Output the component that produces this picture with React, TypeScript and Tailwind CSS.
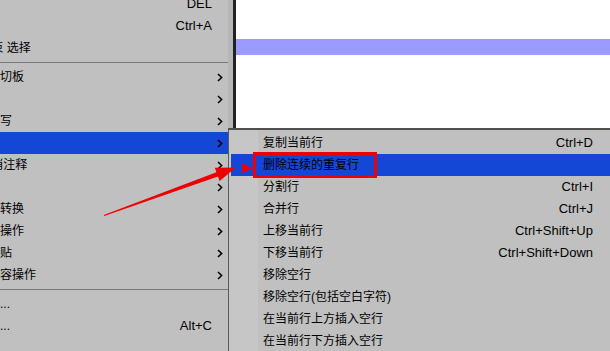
type MenuItem = {
  label: string;
  shortcut?: string;
  sub?: boolean;
  active?: boolean;
};

const topItems: MenuItem[] = [
  { label: "删除", shortcut: "DEL" },
  { label: "全选", shortcut: "Ctrl+A" },
  { label: "开始/结束 选择" },
];

const midItems: MenuItem[] = [
  { label: "复制到剪切板", sub: true },
  { label: "缩进", sub: true },
  { label: "转换大小写", sub: true },
  { label: "行操作", sub: true, active: true },
  { label: "注释/取消注释", sub: true },
  { label: "自动完成", sub: true },
  { label: "文档格式转换", sub: true },
  { label: "空白字符操作", sub: true },
  { label: "选择性粘贴", sub: true },
  { label: "选中的内容操作", sub: true },
];

const bottomItems: MenuItem[] = [
  { label: "列块模式..." },
  { label: "列块编辑...", shortcut: "Alt+C" },
  { label: "字符面板" },
];

const lineItems: MenuItem[] = [
  { label: "复制当前行", shortcut: "Ctrl+D" },
  { label: "删除连续的重复行", active: true },
  { label: "分割行", shortcut: "Ctrl+I" },
  { label: "合并行", shortcut: "Ctrl+J" },
  { label: "上移当前行", shortcut: "Ctrl+Shift+Up" },
  { label: "下移当前行", shortcut: "Ctrl+Shift+Down" },
  { label: "移除空行" },
  { label: "移除空行(包括空白字符)" },
  { label: "在当前行上方插入空行" },
  { label: "在当前行下方插入空行" },
];

const Chevron = () => (
  <svg width="6" height="9" viewBox="0 0 6 9">
    <path d="M1 1 L4.6 4.5 L1 8" fill="none" stroke="#000" strokeWidth="1.6" />
  </svg>
);

const LeftRow = ({ item, first = false }: { item: MenuItem; first?: boolean }) => (
  <div
    className={`h-[22px] flex items-center pr-[5px] ${first ? "mt-[-7px]" : ""} ${
      item.active ? "bg-[#1547d6]" : ""
    }`}
  >
    <span className="ml-[-48px] shrink-0 whitespace-nowrap">{item.label}</span>
    <div className="flex-1" />
    {item.shortcut && <span className="text-[13px] whitespace-nowrap">{item.shortcut}</span>}
    <div className="w-[11px] flex justify-end">{item.sub && <Chevron />}</div>
  </div>
);

const Separator = () => (
  <div className="h-[7px] flex items-center">
    <div className="w-full h-px bg-[#7a7a7a]" />
  </div>
);

const SubRow = ({ item }: { item: MenuItem }) => (
  <div className={`h-[22px] flex items-center pr-[17px] ${item.active ? "bg-[#1547d6]" : ""}`}>
    <div className="w-[27px] shrink-0" />
    <span className="pl-[5px] whitespace-nowrap">{item.label}</span>
    <div className="flex-1" />
    {item.shortcut && <span className="text-[13px] whitespace-nowrap">{item.shortcut}</span>}
  </div>
);

export default function App() {
  return (
    <div className="relative w-[610px] h-[351px] overflow-hidden flex bg-[#c0c0c0] text-black text-[12px] font-['Liberation_Sans','Noto_Sans_CJK_SC',sans-serif]">
      {/* main edit menu, clipped on the left */}
      <div className="w-[228px] shrink-0 overflow-hidden">
        {topItems.map((it, i) => (
          <LeftRow key={it.label} item={it} first={i === 0} />
        ))}
        <Separator />
        {midItems.map((it) => (
          <LeftRow key={it.label} item={it} />
        ))}
        <Separator />
        {bottomItems.map((it) => (
          <LeftRow key={it.label} item={it} />
        ))}
      </div>

      <div className="flex-1 flex flex-col">
        {/* editor behind */}
        <div className="h-[130px] shrink-0 flex border-b-2 border-[#505050]">
          <div className="w-[5px] bg-[#b6b6b6]" />
          <div className="w-[3px] bg-[#222]" />
          <div className="flex-1 bg-white">
            <div className="mt-[39px] h-[16px] bg-[#9b9bff]" />
          </div>
        </div>

        {/* line operations submenu */}
        <div className="flex-1 border-l border-[#5a5a5a] pt-[2px] pl-[2px] bg-[linear-gradient(to_right,#c6c6c6_29px,#c0c0c0_29px)]">
          {lineItems.map((it) => (
            <SubRow key={it.label} item={it} />
          ))}
        </div>
      </div>

      {/* annotation */}
      <div className="absolute left-[253px] top-[152px] w-[124px] h-[26px] border-[3px] border-[#f00000]" />
      <svg className="absolute inset-0 pointer-events-none" width="610" height="351">
        <polygon
          points="103.8,215 216.4,172.2 214.8,167.8 236,167.5 219.6,181 218,176.6 104.2,216"
          fill="#f00000"
        />
        <polygon points="242,163.3 252,168.3 242,173.3" fill="#f00000" />
      </svg>
    </div>
  );
}
